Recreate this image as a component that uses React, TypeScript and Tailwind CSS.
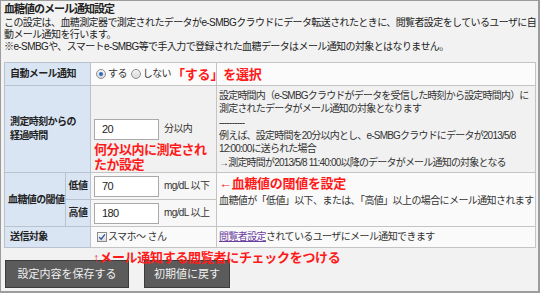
import React from 'react';

const font = "font-['Liberation_Sans','Noto_Sans_CJK_JP',sans-serif]";

function Radio({ checked }: { checked?: boolean }) {
  return (
    <span className="inline-flex h-[10px] w-[10px] items-center justify-center rounded-full border border-[#8f8f8f] bg-gradient-to-b from-[#f4f4f4] to-[#d8d8d8]">
      {checked && <span className="h-[4px] w-[4px] rounded-full bg-[#2a6bc4]" />}
    </span>
  );
}

function TextInput({ value }: { value: string }) {
  return (
    <div className="flex h-[21px] w-[65px] items-center border border-[#a9a9a9] bg-white pl-[7px] text-[11px] text-[#222]">
      {value}
    </div>
  );
}

export default function App() {
  const label = 'bg-[#d9e5f3] border border-[#b9c3cf] font-bold text-[#222] whitespace-nowrap';
  const cell = 'border border-[#c4c4c4]';
  return (
    <div
      className={`${font} relative h-[293px] w-[540px] overflow-hidden border-t border-l border-r-2 border-b-2 border-[#9c9c9c] bg-[#f2f2f2] pt-[2px] text-[10px] leading-[12px] tracking-[-0.6px] text-[#222]`}
    >
      <div className="pl-[3px] text-[11px] font-bold leading-[13px] tracking-[-1px]">血糖値のメール通知設定</div>
      <div className="whitespace-nowrap pl-[3px] leading-[12px]">
        <div className="mt-[1px]">
          この設定は、血糖測定器で測定されたデータがe-SMBGクラウドにデータ転送されたときに、閲覧者設定をしているユーザに自
        </div>
        <div>動メール通知を行います。</div>
        <div>※e-SMBGや、スマートe-SMBG等で手入力で登録された血糖データはメール通知の対象とはなりません。</div>
      </div>

      <table className="mt-[9px] ml-[3px] table-fixed border-collapse border border-[#a8a8a8]">
        <colgroup>
          <col className="w-[61px]" />
          <col className="w-[25px]" />
          <col className="w-[126px]" />
          <col className="w-[319px]" />
        </colgroup>
        <tbody>
          <tr className="h-[23px]">
            <td colSpan={2} className={`${label} pl-[5px]`}>
              自動メール通知
            </td>
            <td className={`${cell} bg-[#fbfbfb] pl-[5px]`}>
              <div className="flex items-center gap-[2px] text-[#333]">
                <Radio checked />
                <span>する</span>
                <span className="ml-[2px] flex">
                  <Radio />
                </span>
                <span>しない</span>
              </div>
            </td>
            <td className={`${cell} bg-[#fbfbfb]`} />
          </tr>
          <tr className="h-[87px]">
            <td colSpan={2} className={`${label} pl-[5px] leading-[14px]`}>
              測定時刻からの
              <br />
              経過時間
            </td>
            <td className={`${cell} bg-[#f1f1f1] pl-[3px]`}>
              <div className="flex items-center gap-[5px] text-[#333]">
                <TextInput value="20" />
                <span>分以内</span>
              </div>
            </td>
            <td className={`${cell} bg-[#f1f1f1] pl-[2px] leading-[13.4px] tracking-[-0.8px] whitespace-nowrap text-[#333]`}>
              <div>設定時間内（e-SMBGクラウドがデータを受信した時刻から設定時間内）に</div>
              <div>測定されたデータがメール通知の対象となります</div>
              <div>----------</div>
              <div>例えば、設定時間を20分以内とし、e-SMBGクラウドにデータが2013/5/8</div>
              <div>12:00:00に送られた場合</div>
              <div>→測定時間が2013/5/8 11:40:00以降のデータがメール通知の対象となる</div>
            </td>
          </tr>
          <tr className="h-[27px]">
            <td rowSpan={2} className={`${label} pl-[3px]`}>
              血糖値の閾値
            </td>
            <td className={`${label} text-center`}>低値</td>
            <td className={`${cell} bg-[#f7f7f7] pl-[3px]`}>
              <div className="flex items-center gap-[5px] text-[#333]">
                <TextInput value="70" />
                <span>mg/dL 以下</span>
              </div>
            </td>
            <td rowSpan={2} className={`${cell} bg-[#fafafa] pl-[2px] whitespace-nowrap text-[#333]`}>
              <div className="mt-[3px]">血糖値が「低値」以下、または、「高値」以上の場合にメール通知されます</div>
            </td>
          </tr>
          <tr className="h-[27px]">
            <td className={`${label} text-center`}>高値</td>
            <td className={`${cell} bg-[#f7f7f7] pl-[3px]`}>
              <div className="flex items-center gap-[5px] text-[#333]">
                <TextInput value="180" />
                <span>mg/dL 以上</span>
              </div>
            </td>
          </tr>
          <tr className="h-[21px]">
            <td colSpan={2} className={`${label} pl-[5px]`}>
              送信対象
            </td>
            <td className={`${cell} bg-[#fafafa] pl-[6px]`}>
              <div className="flex items-center gap-[1px] text-[#333]">
                <span className="flex h-[10px] w-[10px] items-center justify-center border border-[#8c8c8c] bg-gradient-to-b from-[#fafafa] to-[#dcdcdc]">
                  <svg viewBox="0 0 10 10" className="h-[8px] w-[8px]">
                    <path d="M1.5 5.2 L4 7.8 L8.6 1.8" fill="none" stroke="#2c4f9e" strokeWidth="1.6" />
                  </svg>
                </span>
                <span>スマホ～ さん</span>
              </div>
            </td>
            <td className={`${cell} bg-[#fafafa] pl-[2px] whitespace-nowrap text-[#333]`}>
              <span className="text-[#6a3fa0] underline">閲覧者設定</span>されているユーザにメール通知できます
            </td>
          </tr>
        </tbody>
      </table>

      <div className="mt-[12px] flex gap-[15px] pl-[4px] tracking-[0px]">
        <button className="h-[28px] w-[124px] border border-[#3c3c3c] bg-[#5b5b5b] text-[11px] text-[#f0f0f0]">
          設定内容を保存する
        </button>
        <button className="h-[28px] w-[86px] border border-[#3c3c3c] bg-[#5b5b5b] text-[11px] text-[#f0f0f0]">
          初期値に戻す
        </button>
      </div>

      {/* red annotations drawn over the table */}
      <div className="pointer-events-none absolute left-[171px] top-[66px] whitespace-nowrap text-[13px] font-bold leading-[16px] tracking-[-0.2px] text-[#ff1a1a]">
        「する」を選択
      </div>
      <div className="pointer-events-none absolute left-[93px] top-[141px] text-[13px] font-bold leading-[15px] tracking-[-0.5px] text-[#ff1a1a]">
        何分以内に測定され
        <br />
        たか設定
      </div>
      <div className="pointer-events-none absolute left-[218px] top-[175px] whitespace-nowrap text-[13px] font-bold leading-[16px] tracking-[-0.3px] text-[#ff1a1a]">
        ←血糖値の閾値を設定
      </div>
      <div className="pointer-events-none absolute left-[92px] top-[249px] whitespace-nowrap text-[13px] font-bold leading-[16px] tracking-[-0.3px] text-[#ff1a1a]">
        ↑メール通知する閲覧者にチェックをつける
      </div>
    </div>
  );
}
